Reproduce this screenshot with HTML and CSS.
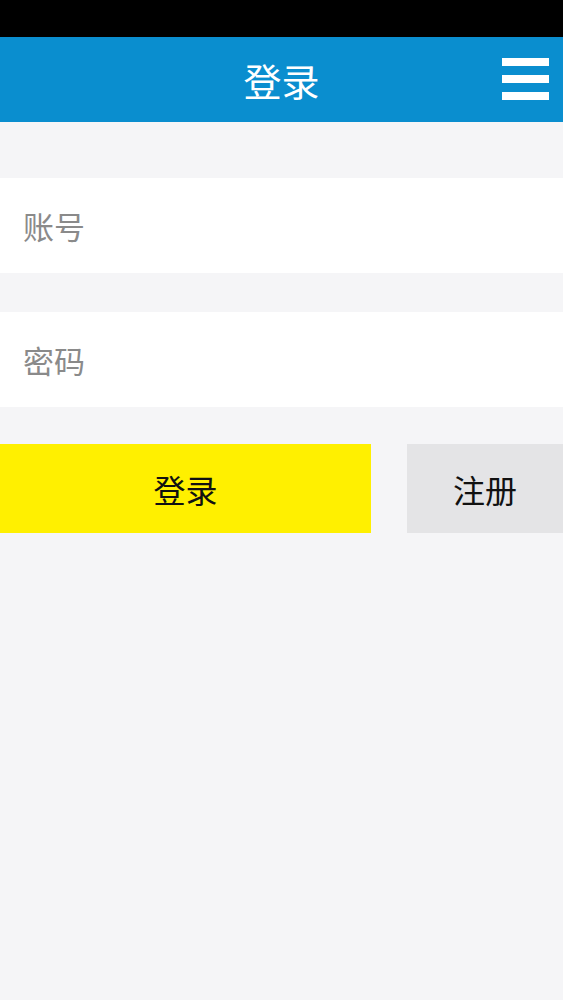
FILE: index.html
```html
<!DOCTYPE html>
<html lang="zh">
<head>
<meta charset="utf-8">
<title>登录</title>
<link rel="stylesheet" href="styles.css">
</head>
<body>
<div class="statusbar"></div>
<header class="topbar">
  <h1 class="title">登录</h1>
  <div class="menu" aria-label="菜单">
    <span></span><span></span><span></span>
  </div>
</header>
<main class="form">
  <div class="field"><span class="placeholder">账号</span></div>
  <div class="field"><span class="placeholder">密码</span></div>
  <div class="actions">
    <button class="btn btn-login">登录</button>
    <button class="btn btn-register">注册</button>
  </div>
</main>
</body>
</html>
```
FILE: styles.css
```css
html, body {
  margin: 0;
  padding: 0;
  background: #f5f5f7;
  font-family: "Noto Sans CJK SC", "Noto Sans", sans-serif;
}
.statusbar {
  height: 37px;
  background: #000;
}
.topbar {
  position: relative;
  height: 85px;
  background: #0a8ecf;
  display: flex;
  align-items: center;
  justify-content: center;
}
.title {
  margin: 0;
  color: #fff;
  font-size: 38px;
  font-weight: 400;
  line-height: 1;
}
.menu {
  position: absolute;
  right: 14px;
  top: 21px;
  width: 47px;
  display: flex;
  flex-direction: column;
  gap: 9px;
}
.menu span {
  display: block;
  height: 8px;
  background: #fff;
}
.form {
  padding-top: 56px;
  display: flex;
  flex-direction: column;
}
.field {
  height: 95px;
  background: #fff;
  display: flex;
  align-items: center;
  padding-left: 23px;
}
.field + .field {
  margin-top: 39px;
}
.placeholder {
  color: #8a8a8a;
  font-size: 31px;
  line-height: 1;
}
.actions {
  margin-top: 37px;
  display: flex;
  gap: 36px;
  height: 89px;
}
.btn {
  border: none;
  margin: 0;
  padding: 0;
  font-family: inherit;
  font-size: 32px;
  color: #111;
  display: flex;
  align-items: center;
  justify-content: center;
}
.btn-login {
  width: 371px;
  background: #fff000;
}
.btn-register {
  flex: 1;
  background: #e4e4e6;
}
```
